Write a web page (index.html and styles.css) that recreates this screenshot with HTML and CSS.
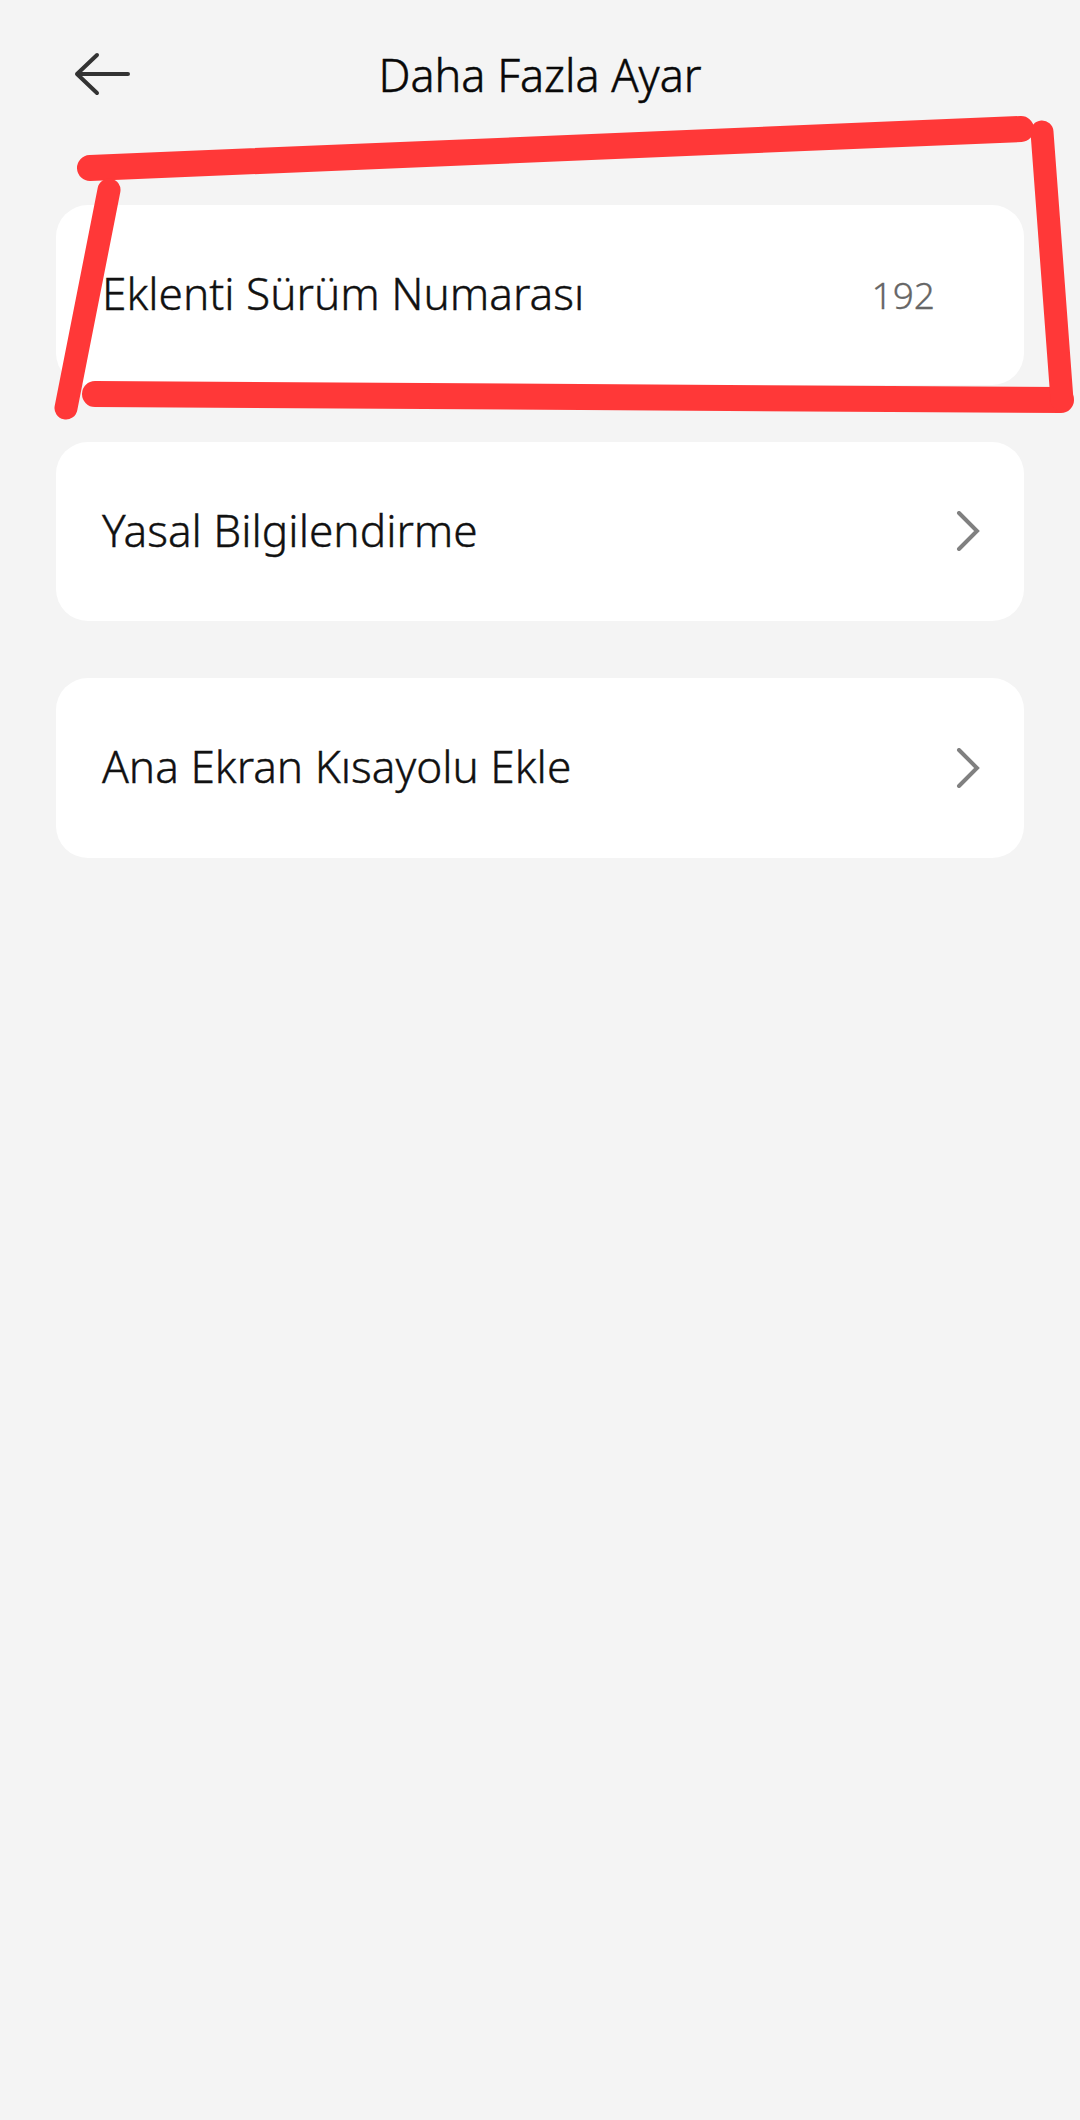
FILE: index.html
```html
<!DOCTYPE html>
<html lang="tr">
<head>
    <meta charset="UTF-8">
    <title>Daha Fazla Ayar</title>
    <link rel="stylesheet" href="styles.css">
</head>
<body>
<header class="top-bar">
    <svg class="back-icon" width="56" height="44" viewBox="0 0 56 44">
        <path d="M54 22H3M23 3L3 22L23 41"/>
    </svg>
    <h1>Daha Fazla Ayar</h1>
</header>

<main class="settings-list">
    <div class="row">
        <span class="row-label">Eklenti Sürüm Numarası</span>
        <span class="row-value">192</span>
    </div>
    <div class="row">
        <span class="row-label">Yasal Bilgilendirme</span>
        <svg class="chevron" width="24" height="40" viewBox="0 0 24 40">
            <path d="M3 2L21 20L3 38"/>
        </svg>
    </div>
    <div class="row">
        <span class="row-label">Ana Ekran Kısayolu Ekle</span>
        <svg class="chevron" width="24" height="40" viewBox="0 0 24 40">
            <path d="M3 2L21 20L3 38"/>
        </svg>
    </div>
</main>

<!-- hand drawn red marker on top of the screenshot -->
<svg class="marker" width="1080" height="2120" viewBox="0 0 1080 2120">
    <path class="marker-flat" d="M90 168L1021 129"/>
    <path class="marker-flat" d="M95 394L1061 400"/>
    <path d="M109 190L66 408"/>
    <path d="M1042 132L1062 400"/>
</svg>
</body>
</html>
```

FILE: styles.css
```css
body {
    margin: 0;
    width: 1080px;
    height: 2120px;
    overflow: hidden;
    position: relative;
    background-color: #f4f4f4;
    font-family: 'Noto Sans', sans-serif;
    color: #111;
}

.top-bar {
    height: 148px;
    margin-bottom: 57px;
    position: relative;
    display: flex;
    justify-content: center;
    align-items: center;
}

.top-bar h1 {
    margin: 0;
    font-size: 45px;
    font-weight: 300;
    color: #080808;
    -webkit-text-stroke: 0.5px #080808;
}

.back-icon {
    position: absolute;
    left: 74px;
    top: 52px;
}

.back-icon path {
    fill: none;
    stroke: #333;
    stroke-width: 4;
    stroke-linecap: round;
    stroke-linejoin: round;
}

.settings-list {
    display: flex;
    flex-direction: column;
    gap: 57px;
    padding: 0 56px;
}

.row {
    height: 179.5px;
    padding: 0 44px 0 46px;
    display: flex;
    justify-content: space-between;
    align-items: center;
    background-color: #fff;
    border-radius: 32px;
}

.row-label {
    margin-top: -3px;
    font-size: 44.2px;
    font-weight: 300;
    -webkit-text-stroke: 0.4px #111;
}

.row-value {
    margin-right: 45px;
    font-size: 37px;
    font-weight: 300;
    color: #666;
    -webkit-text-stroke: 0.3px #666;
}

.chevron path {
    fill: none;
    stroke: #808080;
    stroke-width: 4;
    stroke-linecap: round;
    stroke-linejoin: miter;
}

.marker {
    position: absolute;
    left: 0;
    top: 0;
}

.marker path {
    fill: none;
    stroke: #ff3838;
    stroke-width: 23;
    stroke-linecap: round;
}

.marker .marker-flat {
    stroke-width: 26;
}
```
